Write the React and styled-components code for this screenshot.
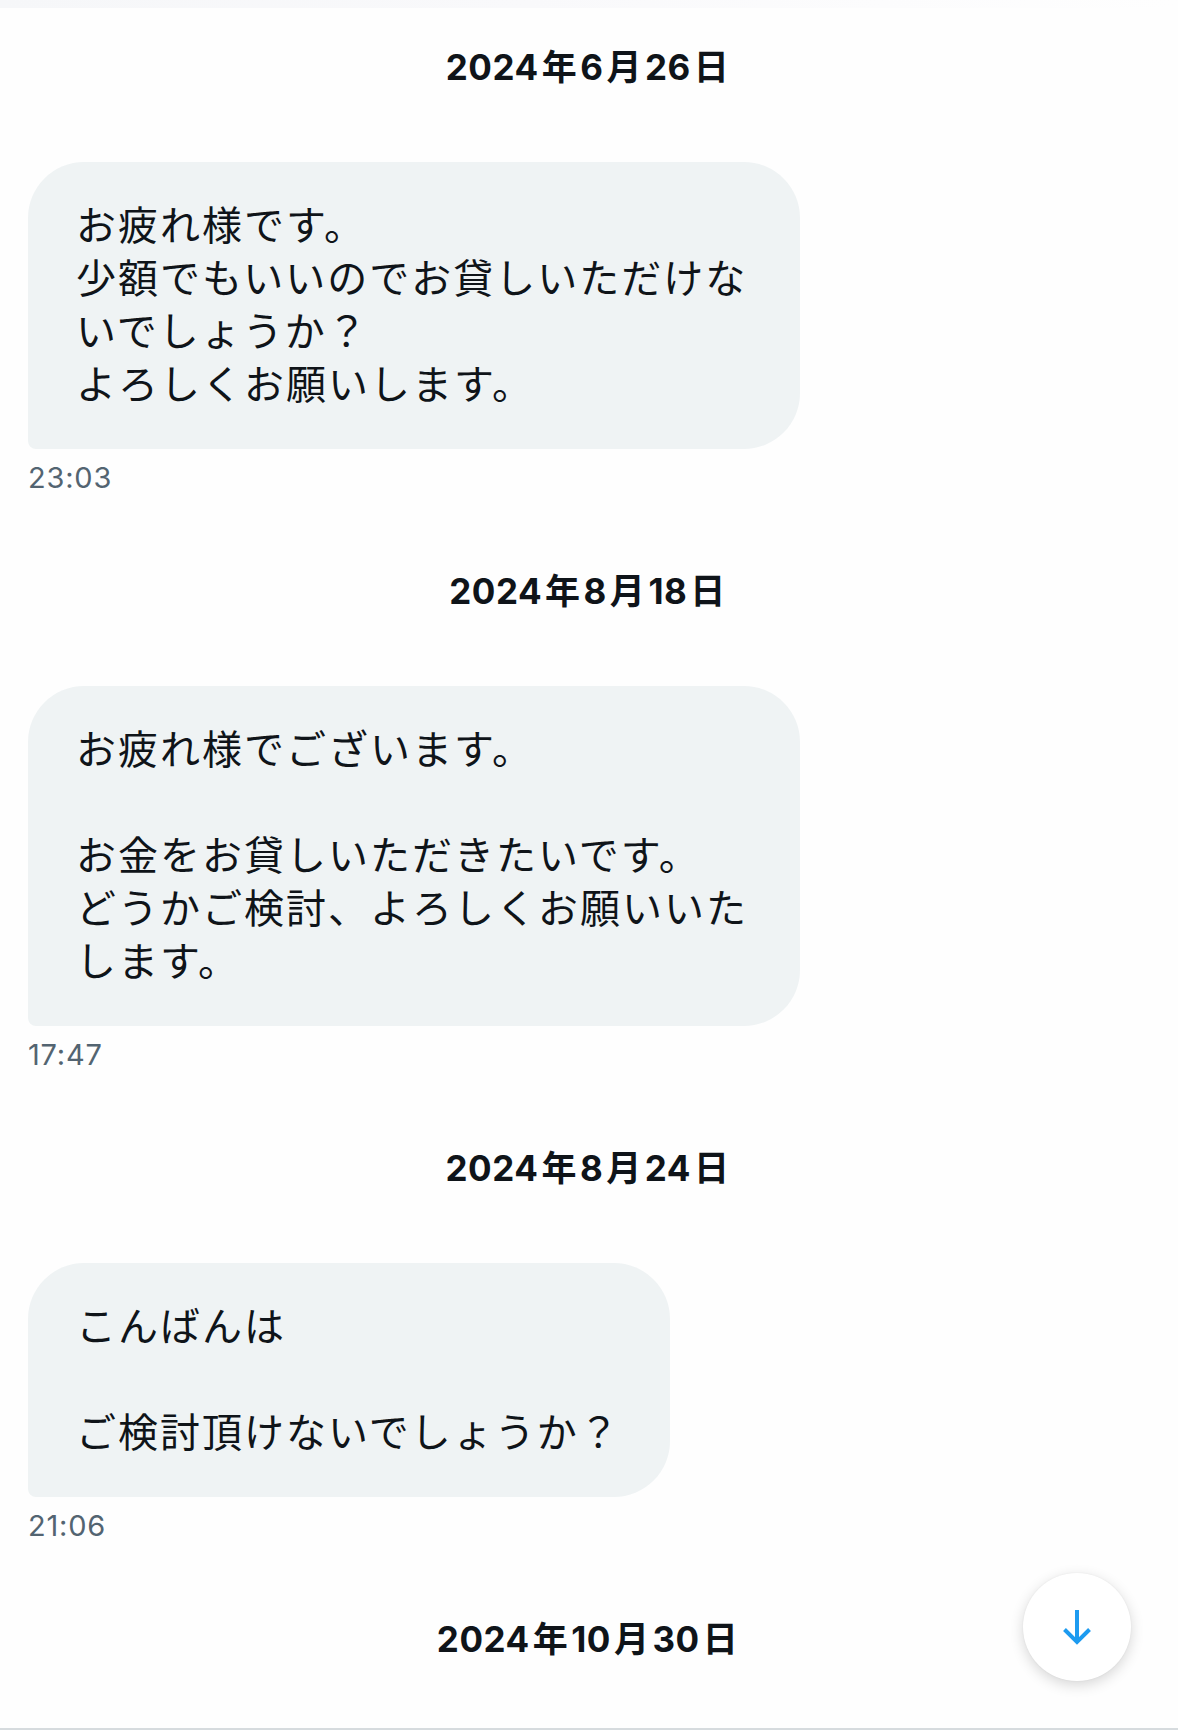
import React from 'react';
import styled, { createGlobalStyle } from 'styled-components';

const GlobalStyle = createGlobalStyle`
  html, body {
    margin: 0;
    padding: 0;
    background: #fefefe;
  }
  * { box-sizing: border-box; }
`;

const Screen = styled.div`
  position: relative;
  height: 1730px;
  overflow: hidden;
  background: #fefefe;
  border-bottom: 2px solid #d6dbde;
  font-family: "Noto Sans CJK JP", sans-serif;
  color: #0f1419;
`;

const TopShade = styled.div`
  height: 8px;
  background: linear-gradient(to right, #f6f7f9 0%, #f9f9fb 45%, #fcfcfd 75%, #fefefe 100%);
`;

const Thread = styled.div`
  display: flex;
  flex-direction: column;
  align-items: flex-start;
  padding: 29px 28px 0 28px;
`;

const DateLabel = styled.div`
  align-self: stretch;
  height: 60px;
  line-height: 60px;
  text-align: center;
  font-family: Inter, "Noto Sans CJK JP", sans-serif;
  font-weight: 700;
  font-size: 35px;
  letter-spacing: 0.5px;
  color: #0f1419;
  margin-top: ${p => (p.$first ? '0' : '63px')};
`;

const Kanji = styled.span`
  margin: 0 3px;
`;

const Bubble = styled.div`
  margin-top: 65px;
  max-width: 772px;
  padding: 35px 49px 40px 48px;
  background: #eff3f4;
  border-radius: 56px 56px 56px 8px;
  font-size: 40px;
  letter-spacing: 2px;
  line-height: 53px;
  white-space: pre-wrap;
  word-break: break-all;
`;

const Stamp = styled.div`
  margin-top: 9px;
  height: 40px;
  line-height: 40px;
  font-family: Inter, "Liberation Sans", sans-serif;
  font-size: 29px;
  letter-spacing: 0.8px;
  color: #536471;
`;

const ScrollButton = styled.button`
  position: absolute;
  right: 47px;
  bottom: 47px;
  width: 108px;
  height: 108px;
  border: none;
  border-radius: 50%;
  background: #ffffff;
  box-shadow: 0 4px 14px rgba(0, 0, 0, 0.16), 0 0 2px rgba(0, 0, 0, 0.06);
  display: flex;
  align-items: center;
  justify-content: center;
  padding: 0;
`;

const messages = [
  {
    date: '2024年6月26日',
    text: 'お疲れ様です。\n少額でもいいのでお貸しいただけないでしょうか？\nよろしくお願いします。',
    time: '23:03'
  },
  {
    date: '2024年8月18日',
    text: 'お疲れ様でございます。\n\nお金をお貸しいただきたいです。\nどうかご検討、よろしくお願いいたします。',
    time: '17:47'
  },
  {
    date: '2024年8月24日',
    text: 'こんばんは\n\nご検討頂けないでしょうか？',
    time: '21:06'
  }
];

function DateText({ value }) {
  const parts = value.split(/([年月日])/).filter(Boolean);
  return parts.map((p, i) =>
    /[年月日]/.test(p) ? <Kanji key={i}>{p}</Kanji> : <React.Fragment key={i}>{p}</React.Fragment>
  );
}

function ArrowDown() {
  return (
    <svg width="30" height="36" viewBox="0 0 30 36" fill="none">
      <path d="M15 1 V33" stroke="#1d9bf0" strokeWidth="4" />
      <path d="M2.5 20.5 L15 33 L27.5 20.5" stroke="#1d9bf0" strokeWidth="4" strokeLinejoin="miter" />
    </svg>
  );
}

export default function App() {
  return (
    <Screen>
      <GlobalStyle />
      <TopShade />
      <Thread>
        {messages.map((m, i) => (
          <React.Fragment key={m.date}>
            <DateLabel $first={i === 0}><DateText value={m.date} /></DateLabel>
            <Bubble>{m.text}</Bubble>
            <Stamp>{m.time}</Stamp>
          </React.Fragment>
        ))}
        <DateLabel><DateText value="2024年10月30日" /></DateLabel>
      </Thread>
      <ScrollButton aria-label="scroll down">
        <ArrowDown />
      </ScrollButton>
    </Screen>
  );
}
